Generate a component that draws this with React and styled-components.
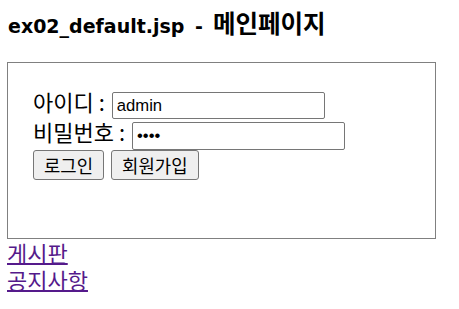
import React from 'react';
import styled, { createGlobalStyle } from 'styled-components';

const GlobalStyle = createGlobalStyle`
	body {
		margin: 0;
		background: #fff;
		color: #000;
		font-family: "Noto Sans CJK KR", "Noto Sans", sans-serif;
		font-size: 22px;
	}
`;

const Page = styled.div`
	padding: 12px 0 0 7px;
`;

const Title = styled.h3`
	height: 28px;
	margin: 0 0 22px;
	padding-left: 1px;
	font-family: "DejaVu Sans", "Noto Sans CJK KR", sans-serif;
	font-size: 19px;
	font-weight: 700;
	line-height: 28px;
	word-spacing: 4px;
`;

const TitleKo = styled.span`
	margin-left: 10px;
	font-family: "Noto Sans CJK KR", sans-serif;
	font-size: 24.5px;
	line-height: 20px;
`;

const LoginBox = styled.div`
	box-sizing: border-box;
	display: flex;
	flex-direction: column;
	width: 429px;
	height: 177px;
	padding: 29px 25px 0;
	border: 1px solid #808080;
`;

const Row = styled.div`
	display: flex;
	align-items: flex-start;
	gap: 7px;
	margin-bottom: ${props => props.$space || 0}px;
`;

const Label = styled.span`
	white-space: pre;
	line-height: 19px;
`;

const Field = styled.input`
	box-sizing: border-box;
	width: 213px;
	height: ${props => props.$h || 27}px;
	margin: 0;
	padding: 0 4px;
	border: 1px solid #767676;
	border-radius: 2px;
	font-family: "Liberation Sans", Arial, sans-serif;
	font-size: 16.67px;
	color: #000;
	background: #fff;
`;

const Buttons = styled.div`
	display: flex;
	gap: 7px;
`;

const Button = styled.button`
	box-sizing: border-box;
	height: 30px;
	margin: 0;
	padding: 0 10px;
	border: 1px solid #767676;
	border-radius: 3px;
	background: #efefef;
	font-family: "Noto Sans CJK KR", sans-serif;
	font-size: 17.8px;
	color: #000;
`;

const Links = styled.div`
	display: flex;
	flex-direction: column;
	align-items: flex-start;
`;

const Link = styled.a`
	color: #551a8b;
	font-size: 22px;
	line-height: 27px;
	text-decoration: underline;
	text-decoration-thickness: 2px;
	text-underline-offset: 1px;
`;

export default function App() {
	return (
		<>
			<GlobalStyle />
			<Page>
				<Title>
					ex02_default.jsp -<TitleKo>메인페이지</TitleKo>
				</Title>
				<LoginBox>
					<Row $space={3}>
						<Label>아이디 :</Label>
						<Field type='text' defaultValue='admin' />
					</Row>
					<Row>
						<Label>비밀번호 :</Label>
						<Field type='password' defaultValue='1234' $h={28} />
					</Row>
					<Buttons>
						<Button>로그인</Button>
						<Button>회원가입</Button>
					</Buttons>
				</LoginBox>
				<Links>
					<Link href='#board'>게시판</Link>
					<Link href='#notice'>공지사항</Link>
				</Links>
			</Page>
		</>
	);
}
